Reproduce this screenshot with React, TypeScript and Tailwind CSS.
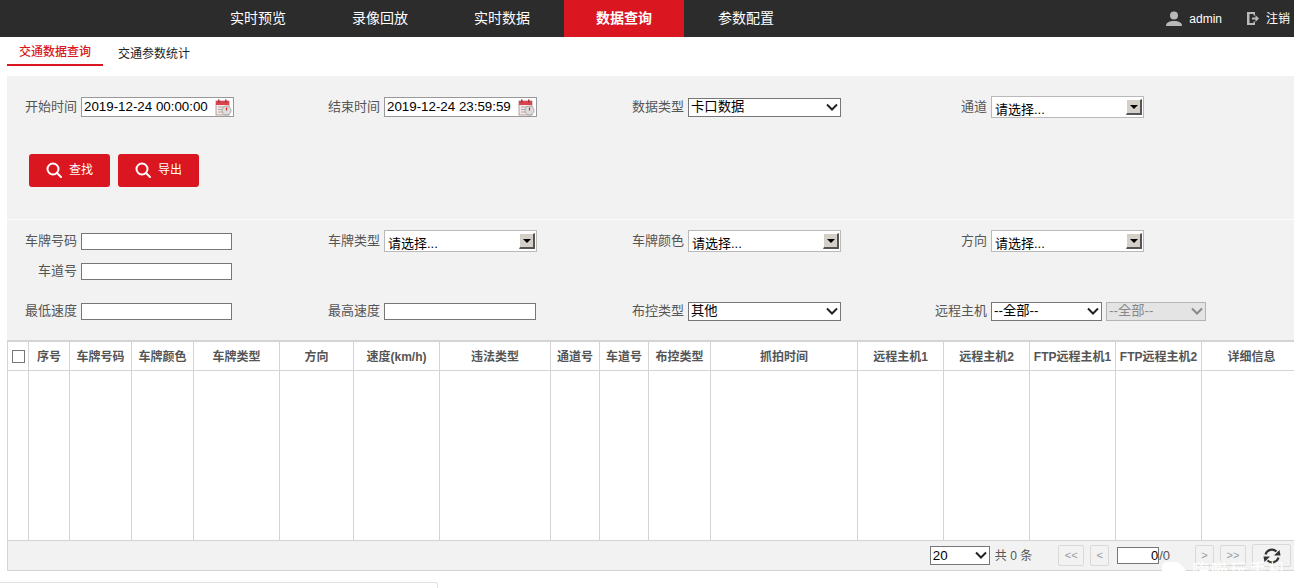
const cjk = "font-['Arial','Liberation_Sans','Noto_Sans_CJK_SC',sans-serif]";

const navItems = ["实时预览", "录像回放", "实时数据", "数据查询", "参数配置"];
const columns = [
  { label: "", w: 21 },
  { label: "序号", w: 41 },
  { label: "车牌号码", w: 62 },
  { label: "车牌颜色", w: 62 },
  { label: "车牌类型", w: 86 },
  { label: "方向", w: 74 },
  { label: "速度(km/h)", w: 86 },
  { label: "违法类型", w: 111 },
  { label: "通道号", w: 49 },
  { label: "车道号", w: 49 },
  { label: "布控类型", w: 62 },
  { label: "抓拍时间", w: 147 },
  { label: "远程主机1", w: 86 },
  { label: "远程主机2", w: 86 },
  { label: "FTP远程主机1", w: 86 },
  { label: "FTP远程主机2", w: 86 },
  { label: "详细信息", w: 100 },
];

function SearchIcon() {
  return (
    <svg width="16" height="16" viewBox="0 0 16 16" fill="none" stroke="white" strokeWidth="2">
      <circle cx="7" cy="7" r="5.5" />
      <path d="M11 11l4 4" strokeLinecap="round" />
    </svg>
  );
}

function RefreshIcon() {
  return (
    <svg width="18" height="18" viewBox="0 0 18 18" fill="none" stroke="#333" strokeWidth="2.2">
      <path d="M2.500 7.500A6.700 6.700 0 0 1 13.500 4.500" />
      <path d="M15.500 10.500A6.700 6.700 0 0 1 4.500 13.500" />
      <path d="M17.500 8.500h-6.500l5.500-5.500z" fill="#333" stroke="none" />
      <path d="M.5 9.500h6.500l-5.500 5.500z" fill="#333" stroke="none" />
    </svg>
  );
}

function CalendarIcon() {
  return (
    <svg width="17" height="17" viewBox="0 0 17 17" className="shrink-0">
      <rect x="1" y="2" width="13" height="14" fill="#f3e9e6" stroke="#a88" strokeWidth="0.8" />
      <rect x="1" y="2" width="13" height="4" fill="#d9434e" />
      <rect x="3" y="0.5" width="1.5" height="3" fill="#a33" />
      <rect x="10" y="0.5" width="1.5" height="3" fill="#a33" />
      <path d="M3 8h7M3 10.500h5M3 13h5" stroke="#aaa" strokeWidth="1" />
      <circle cx="11.500" cy="11.500" r="4.500" fill="#ddd" stroke="#999" strokeWidth="0.8" />
      <path d="M11.500 8.500v3" stroke="#d22" strokeWidth="1.200" />
    </svg>
  );
}

function Label({ text }: { text: string }) {
  return <span className="w-[70px] mr-1 text-right text-[13px] text-[#555] shrink-0">{text}</span>;
}

function DateField({ label, value }: { label: string; value: string }) {
  return (
    <div className="flex items-center">
      <Label text={label} />
      <div className="w-[153px] h-5 border border-[#999] bg-white flex items-center justify-between pl-[2px] pr-px">
        <span className="text-[13.33px] text-black leading-none">{value}</span>
        <CalendarIcon />
      </div>
    </div>
  );
}

function TextField({ label, w = "w-[151px]" }: { label: string; w?: string }) {
  return (
    <div className="flex items-center">
      <Label text={label} />
      <input className={`${w} h-[17px] border border-[#767676] bg-white`} />
    </div>
  );
}

// old style combo with the grey 3d arrow button
function Combo({ label }: { label: string }) {
  return (
    <div className="flex items-center">
      <Label text={label} />
      <div className="w-[153px] h-[22px] border border-[#b9b9b9] bg-white flex items-center justify-between pl-[3px] pr-px">
        <span className="text-[13px] text-black leading-none pt-1">请选择...</span>
        <span className="w-4 h-4 bg-[#d4d0c8] border-t border-l border-t-white border-l-white border-r-2 border-b-2 border-r-[#555] border-b-[#555] flex items-center justify-center">
          <span className="w-0 h-0 border-x-[4px] border-x-transparent border-t-[4px] border-t-black" />
        </span>
      </div>
    </div>
  );
}

function NativeSelect({ value, w, disabled }: { value: string; w: string; disabled?: boolean }) {
  return (
    <span className={`${w} relative block h-[19px]`}>
      <select
        disabled={disabled}
        defaultValue={value}
        className={`block w-full h-full appearance-none pl-[2px] text-[13.33px] leading-none border ${
          disabled ? "border-[#b4b4b4] bg-[#e4e4e4] text-[#888]" : "border-[#767676] bg-white text-black"
        }`}
      >
        <option>{value}</option>
      </select>
      <svg width="12" height="8" viewBox="0 0 12 8" fill="none" strokeWidth="2" stroke={disabled ? "#888" : "#222"} className="absolute right-[3px] top-[5px] pointer-events-none">
        <path d="M1 1.500l5 5 5-5" />
      </svg>
    </span>
  );
}

function PageBtn({ text, w }: { text: string; w: string }) {
  return (
    <span className={`${w} h-[21px] border border-[#d9d9d9] rounded-[2px] text-[11px] text-[#999] flex items-center justify-center`}>
      {text}
    </span>
  );
}

export default function App() {
  return (
    <div className={`${cjk} w-[1294px] h-[588px] bg-white overflow-hidden relative`}>
      <header className="h-[37px] bg-[#2c2c2c] flex items-center pl-[197px] pr-1 text-white">
        <nav className="flex h-full text-[14px]">
          {navItems.map((item, i) => (
            <a
              key={item}
              className={
                i === 3
                  ? "w-[120px] mx-px flex items-center justify-center bg-[#da1720] font-bold"
                  : "w-[122px] flex items-center justify-center"
              }
            >
              {item}
            </a>
          ))}
        </nav>
        <div className="ml-auto flex items-center text-[12px]">
          <svg width="16" height="15" viewBox="0 0 16 15" fill="#b9b9b9" className="mr-[7px]">
            <circle cx="8" cy="4.500" r="4" />
            <path d="M0 15c0-3.500 3-4.500 6-5h4c3 .5 6 1.500 6 5z" />
          </svg>
          <span>admin</span>
          <svg width="12" height="13" viewBox="0 0 12 13" fill="#b9b9b9" className="ml-[25px] mr-[7px]">
            <path d="M0 0h8v3.500H6.500V2h-4v9h4V9.500H8V13H0z" />
            <path d="M5 5.500h3.500V3L12 6.500 8.500 10V7.500H5z" />
          </svg>
          <span>注销</span>
        </div>
      </header>

      <div className="h-[29px] pl-[7px] flex text-[12px]">
        <a className="w-[96px] h-full border-b-2 border-[#da1720] text-[#da1720] flex items-center justify-center font-medium pt-[3px]">
          交通数据查询
        </a>
        <a className="ml-[15px] text-[#222] flex items-center pt-[5px]">交通参数统计</a>
      </div>

      <main className="mt-[10px] ml-[7px] bg-[#f2f2f2]">
        <section className="h-[144px] pt-[20px] border-b border-[#fafafa]">
          <div className="grid grid-cols-[303px_304px_303px_1fr] items-center h-[22px]">
            <DateField label="开始时间" value="2019-12-24 00:00:00" />
            <DateField label="结束时间" value="2019-12-24 23:59:59" />
            <div className="flex items-center">
              <Label text="数据类型" />
              <NativeSelect value="卡口数据" w="w-[153px]" />
            </div>
            <Combo label="通道" />
          </div>
          <div className="flex gap-2 ml-[22px] mt-[36px]">
            {["查找", "导出"].map((t) => (
              <button key={t} className="w-[81px] h-[33px] pb-px bg-[#da1720] rounded-[3px] text-white text-[12px] flex items-center justify-center gap-[7px]">
                <SearchIcon />
                {t}
              </button>
            ))}
          </div>
        </section>

        <section className="h-[120px] pt-[10px]">
          <div className="grid grid-cols-[303px_304px_303px_1fr] items-center h-[22px]">
            <TextField label="车牌号码" />
            <Combo label="车牌类型" />
            <Combo label="车牌颜色" />
            <Combo label="方向" />
          </div>
          <div className="mt-2 h-[22px] flex items-center">
            <TextField label="车道号" />
          </div>
          <div className="mt-[18px] grid grid-cols-[303px_304px_303px_1fr] items-center h-[22px]">
            <TextField label="最低速度" />
            <TextField label="最高速度" w="w-[152px]" />
            <div className="flex items-center">
              <Label text="布控类型" />
              <NativeSelect value="其他" w="w-[153px]" />
            </div>
            <div className="flex items-center">
              <Label text="远程主机" />
              <NativeSelect value="--全部--" w="w-[111px]" />
              <span className="w-1" />
              <NativeSelect value="--全部--" w="w-[100px]" disabled />
            </div>
          </div>
        </section>

        <table className="table-fixed w-[1294px] bg-white border-collapse border-t-2 border-[#d4d4d4]">
          <colgroup>
            {columns.map((c, i) => (
              <col key={i} style={{ width: c.w }} />
            ))}
          </colgroup>
          <thead>
            <tr className="h-[29px]">
              {columns.map((c, i) => (
                <th key={i} className="border-x border-b border-[#d4d4d4] text-[12px] font-bold text-[#555] p-0 pt-[2px] whitespace-nowrap">
                  {i === 0 ? <span className="block w-[13px] h-[13px] mx-auto border border-[#767676] bg-white" /> : c.label}
                </th>
              ))}
            </tr>
          </thead>
          <tbody>
            <tr className="h-[170px]">
              {columns.map((c, i) => (
                <td key={i} className="border-x border-[#d4d4d4]" />
              ))}
            </tr>
          </tbody>
        </table>

        <footer className="h-[31px] border-t border-b border-l border-[#d4d4d4] flex items-center text-[13px] text-[#555]">
          <div className="ml-auto flex items-center pr-[3px]">
            <NativeSelect value="20" w="w-[60px]" />
            <span className="ml-[5px] mr-[26px] text-[12px]">共 0 条</span>
            <PageBtn text="<<" w="w-[26px]" />
            <span className="w-[6px]" />
            <PageBtn text="<" w="w-[19px]" />
            <input readOnly value="0" className="ml-[8px] w-[42px] h-[17px] border border-[#767676] bg-white text-right text-[13px] text-black" />
            <span className="mr-[25px]">/0</span>
            <PageBtn text=">" w="w-[19px]" />
            <span className="w-[6px]" />
            <PageBtn text=">>" w="w-[26px]" />
            <span className="ml-[6px] w-[39px] h-[23px] border border-[#d9d9d9] rounded-[2px] flex items-center justify-center">
              <RefreshIcon />
            </span>
          </div>
        </footer>
      </main>

      <div className="mt-[11px] w-[438px] h-[6px] border-t border-r border-[#e2e2e2] rounded-tr-[3px]" />

      {/* faint watermark over the pager corner */}
      <div className="absolute left-[1160px] top-[561px] flex items-start text-white">
        <svg width="26" height="22" viewBox="0 0 26 22" fill="white">
          <path d="M2 22V6c0-3 2-5 5-5h9c2 0 3 1 4 2l4 4c1 1 2 2 2 4v11z" />
        </svg>
        <span className="ml-[6px] mt-[1px] text-[17px] tracking-[2px] leading-none">嗨喵玩手机</span>
      </div>
    </div>
  );
}
